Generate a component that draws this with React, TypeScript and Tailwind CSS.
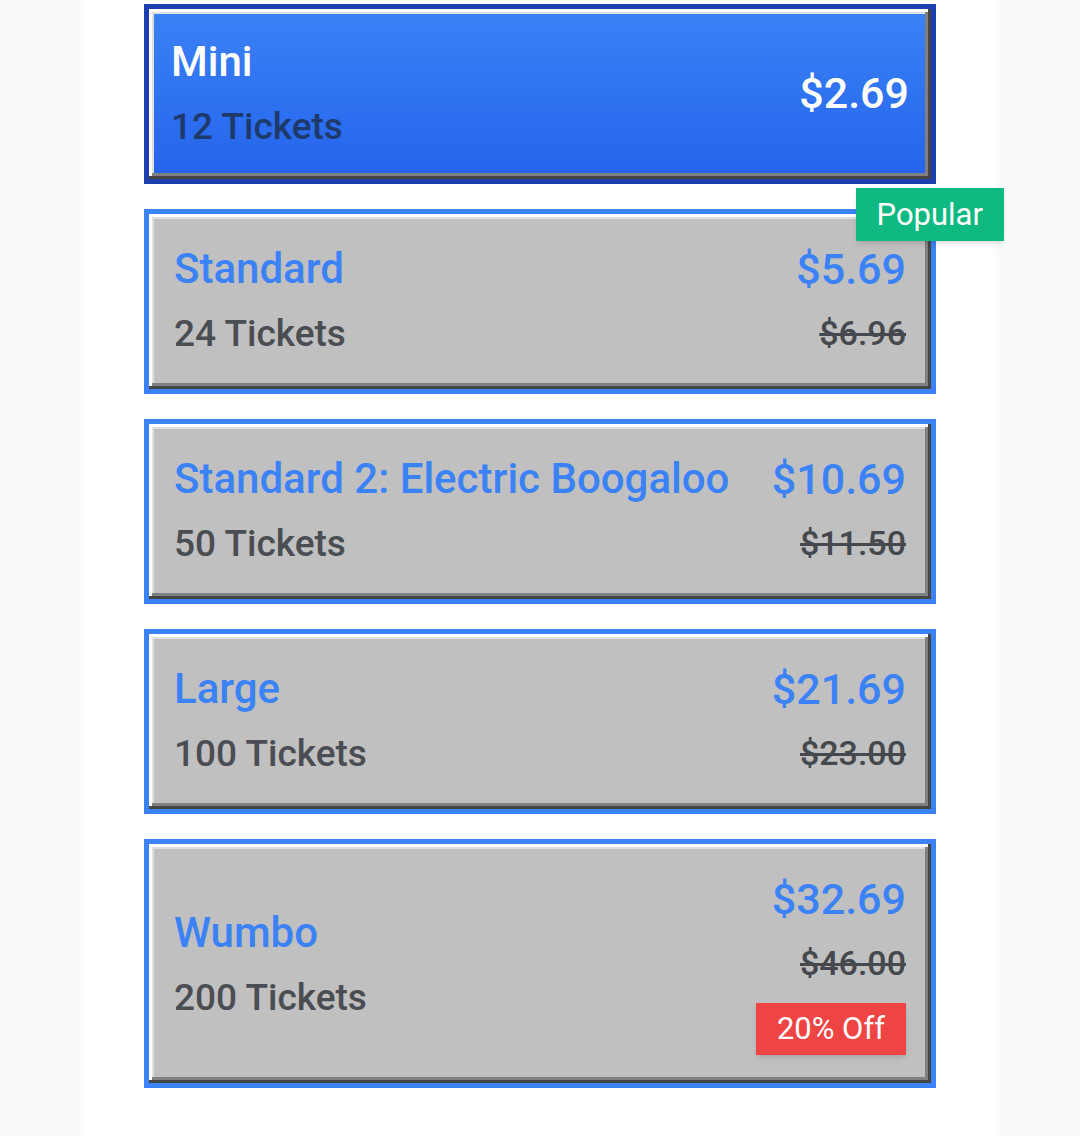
import React from 'react';

type Pack = {
  name: string;
  tickets: number;
  price: string;
  oldPrice?: string;
  popular?: boolean;
  discount?: string;
};

const packs: Pack[] = [
  { name: 'Mini', tickets: 12, price: '$2.69' },
  { name: 'Standard', tickets: 24, price: '$5.69', oldPrice: '$6.96', popular: true },
  { name: 'Standard 2: Electric Boogaloo', tickets: 50, price: '$10.69', oldPrice: '$11.50' },
  { name: 'Large', tickets: 100, price: '$21.69', oldPrice: '$23.00' },
  { name: 'Wumbo', tickets: 200, price: '$32.69', oldPrice: '$46.00', discount: '20% Off' },
];

// win98 style bevel, drawn inside the border
const bevel =
  'shadow-[inset_-3px_-3px_#454545,inset_3px_3px_#ffffff,inset_-6px_-6px_#808080,inset_5px_5px_#dfdfdf]';

function PackCard({ pack, selected }: { pack: Pack; selected: boolean }) {
  if (selected) {
    return (
      <button
        className={`relative flex w-full items-center justify-between border-[5px] border-[#1e40af] bg-gradient-to-b from-[#3b82f6] to-[#2563eb] px-[22px] pt-[25px] pb-[28px] text-left ${bevel}`}
      >
        <div className="flex flex-col">
          <span className="text-[42px] leading-[56px] font-medium text-white">{pack.name}</span>
          <span className="mt-[12px] text-[37px] leading-[49px] font-medium text-[#1e3a6b]">
            {pack.tickets} Tickets
          </span>
        </div>
        <span className="text-[43px] leading-[56px] font-medium text-white">{pack.price}</span>
      </button>
    );
  }

  return (
    <button
      className={`relative flex w-full items-center justify-between border-[5px] border-[#3b82f6] bg-[#c0c0c0] px-[25px] pt-[27px] text-left ${
        pack.discount ? 'pb-[28px]' : 'pb-[31px]'
      } ${bevel}`}
    >
      <div className="flex flex-col">
        <span className="text-[42px] leading-[56px] font-medium text-[#3b82f6]">{pack.name}</span>
        <span className="mt-[12px] text-[37px] leading-[49px] font-medium text-[#4a4d52]">
          {pack.tickets} Tickets
        </span>
      </div>
      <div className="flex flex-col items-end">
        <span className="text-[43px] leading-[56px] font-medium text-[#3b82f6]">{pack.price}</span>
        {pack.oldPrice && (
          <span className="mt-[12px] text-[34px] leading-[49px] font-medium text-[#45484d] line-through">
            {pack.oldPrice}
          </span>
        )}
        {pack.discount && (
          <span className="mt-[15px] bg-[#ef4444] px-[21px] py-[5px] text-[31px] leading-[42px] text-white shadow-md">
            {pack.discount}
          </span>
        )}
      </div>
      {pack.popular && (
        <span className="absolute -top-[26px] -right-[73px] bg-[#10b981] px-[21px] py-[6px] text-[31px] leading-[41px] text-white shadow-md">
          Popular
        </span>
      )}
    </button>
  );
}

export default function App() {
  return (
    <div
      className="min-h-screen bg-[#f9fafb]"
      style={{ fontFamily: 'Roboto, "Liberation Sans", sans-serif' }}
    >
      <div className="mx-auto flex min-h-[1136px] w-[912px] flex-col gap-[25px] bg-white px-[60px] pt-[4px] pb-[48px]">
        {packs.map((p, i) => (
          <PackCard key={p.name} pack={p} selected={i === 0} />
        ))}
      </div>
    </div>
  );
}
